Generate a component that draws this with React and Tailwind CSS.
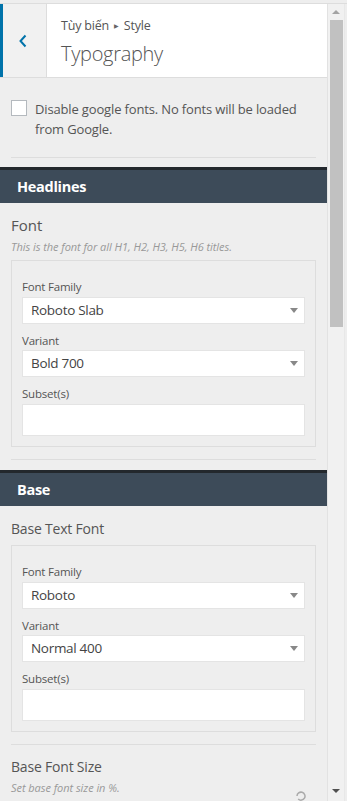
import React from 'react';

const font = { fontFamily: '"Open Sans", "Noto Sans", sans-serif' };

const Select = ({ value }) => (
  <div className="h-[27px] bg-white border border-[#e4e4e4] flex items-center justify-between pl-[8px] pr-[6px]">
    <span className="text-[13.5px] text-[#444] tracking-[-0.3px]">{value}</span>
    <svg width="8" height="5" viewBox="0 0 8 5"><path d="M0 0h8L4 5z" fill="#888" /></svg>
  </div>
);

const FontBox = ({ family, variant, top }) => (
  <div className={`mx-[11px] border border-[#ddd] px-[10px] pb-[10px] ${top}`}>
    <div className="text-[11.5px] leading-[14px] text-[#555] mt-[19px] mb-[3px] tracking-[-0.2px]">Font Family</div>
    <Select value={family} />
    <div className="text-[11.5px] leading-[14px] text-[#555] mt-[10px] mb-[2px] tracking-[-0.2px]">Variant</div>
    <Select value={variant} />
    <div className="text-[11.5px] leading-[14px] text-[#555] mt-[10px] mb-[3px] tracking-[-0.2px]">Subset(s)</div>
    <div className="h-[32px] bg-white border border-[#e4e4e4]" />
  </div>
);

const SectionBar = ({ title }) => (
  <div className="border-t-[3px] border-[#23282d] bg-[#3d4b59] h-[36px] flex items-center pl-[17px]">
    <span className="text-white font-bold text-[14.5px] tracking-[-0.3px]">{title}</span>
  </div>
);

export default function App() {
  return (
    <div className="w-[347px] h-[801px] overflow-hidden bg-[#eee] flex flex-col" style={font}>
      <div className="h-[4px] bg-[#eee] border-b border-[#ddd] shrink-0" />
      <div className="flex flex-1 min-h-0">
        <div className="w-[327px] flex flex-col overflow-hidden">
          {/* header */}
          <div className="h-[74px] flex bg-white border-b border-[#ddd] shrink-0">
            <div className="w-[47px] bg-[#f1f1f1] border-l-[3px] border-[#0073aa] border-r border-r-[#ddd] flex items-center justify-center">
              <svg width="10" height="14" viewBox="0 0 10 14" className="ml-[-4px]">
                <path d="M7.5 1.5L2.5 7l5 5.5" fill="none" stroke="#0073aa" strokeWidth="2" />
              </svg>
            </div>
            <div className="pl-[14px] pt-[14px]">
              <div className="text-[12.5px] text-[#555] leading-[16px] tracking-[-0.2px] flex items-center">
                Tùy biến
                <span className="text-[6px] mx-[5px] text-[#666]">▶</span>
                Style
              </div>
              <div className="text-[20px] font-light text-[#555] leading-[26px] mt-[7px] tracking-[-0.3px]">Typography</div>
            </div>
          </div>

          {/* checkbox */}
          <div className="flex mx-[11px] mt-[21px]">
            <div className="w-[16px] h-[16px] bg-white border border-[#b4b9be] shrink-0 mt-[1px]" />
            <div className="ml-[8px] text-[13px] text-[#555] leading-[20px] tracking-[-0.15px]">
              Disable google fonts. No fonts will be loaded from Google.
            </div>
          </div>
          <div className="mx-[11px] mt-[18px] border-t border-[#ddd]" />

          <div className="mt-[9px]"><SectionBar title="Headlines" /></div>
          <div className="mx-[11px] mt-[12px] text-[15px] text-[#555] leading-[20px]">Font</div>
          <div className="mx-[11px] mt-[4px] text-[11px] italic text-[#999] leading-[16px] tracking-[-0.05px]">
            This is the font for all H1, H2, H3, H5, H6 titles.
          </div>
          <FontBox family="Roboto Slab" variant="Bold 700" top="mt-[5px]" />
          <div className="mx-[11px] mt-[12px] border-t border-[#ddd]" />

          <div className="mt-[10px]"><SectionBar title="Base" /></div>
          <div className="mx-[11px] mt-[13px] text-[14px] text-[#555] leading-[20px] tracking-[-0.2px]">Base Text Font</div>
          <FontBox family="Roboto" variant="Normal 400" top="mt-[6px]" />
          <div className="mx-[11px] mt-[12px] border-t border-[#ddd]" />
          <div className="mx-[11px] mt-[12px] text-[14px] text-[#555] leading-[20px] tracking-[-0.2px]">Base Font Size</div>
          <div className="mx-[11px] mt-[3px] text-[11px] italic text-[#999] leading-[16px] tracking-[-0.05px]">
            Set base font size in %.
          </div>
          <div className="relative">
            <svg width="14" height="14" viewBox="0 0 14 14" className="absolute left-[294px] top-[-6px]">
              <path d="M3 6a4 4 0 1 1 1.2 3" fill="none" stroke="#aaa" strokeWidth="1.5" />
            </svg>
          </div>
        </div>

        {/* scrollbar */}
        <div className="w-[18px] bg-[#f1f1f1] border-l border-[#e2e2e2] border-r border-r-[#e8e8e8] flex flex-col items-center">
          <div className="h-[16px] flex items-center justify-center">
            <svg width="8" height="4" viewBox="0 0 8 4"><path d="M0 4h8L4 0z" fill="#a3a3a3" /></svg>
          </div>
          <div className="w-[13px] h-[307px] bg-[#c1c1c1]" />
          <div className="flex-1" />
          <div className="h-[16px] flex items-center justify-center mb-[2px]">
            <svg width="8" height="4" viewBox="0 0 8 4"><path d="M0 0h8L4 4z" fill="#505050" /></svg>
          </div>
        </div>
      </div>
    </div>
  );
}
